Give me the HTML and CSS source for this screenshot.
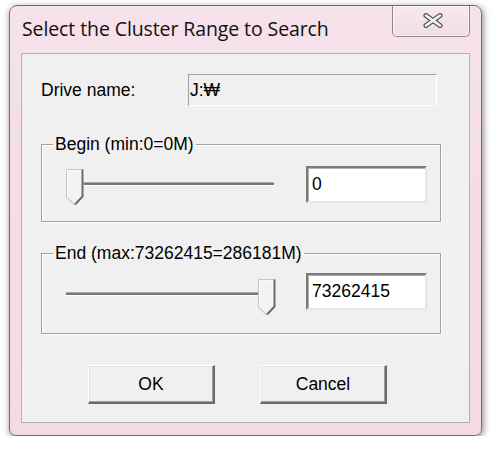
FILE: index.html
```html
<!DOCTYPE html>
<html>
<head>
<meta charset="utf-8">
<link rel="stylesheet" href="styles.css">
</head>
<body>
<div class="window">
  <div class="titlebar">
    <div class="title">Select the Cluster Range to Search</div>
    <div class="close">
      <svg width="22" height="15" viewBox="0 0 22 15">
        <path d="M4 2.5 L18 12.5 M18 2.5 L4 12.5" stroke="#5a5a5a" stroke-width="5.2" stroke-linecap="round" fill="none"/>
        <path d="M4 2.5 L18 12.5 M18 2.5 L4 12.5" stroke="#f4f4f4" stroke-width="2.6" stroke-linecap="round" fill="none"/>
      </svg>
    </div>
  </div>
  <div class="client">
    <div class="drive-row">
      <span class="label">Drive name:</span>
      <div class="drive-box">J:₩</div>
    </div>
    <fieldset class="group group-begin">
      <legend>Begin (min:0=0M)</legend>
      <div class="row">
        <div class="slider slider-begin">
          <div class="track"></div>
          <svg class="thumb" style="left:0px" width="18" height="37" viewBox="0 0 18 37">
            <path d="M0.5 0.5 H17.5 V28 L9 36.5 L0.5 28 Z" fill="#f3f3f3"/>
            <path d="M1 28 V1 H16.5" stroke="#ffffff" stroke-width="1" fill="none"/>
            <path d="M0.5 28.5 V0.5 H17" stroke="#c6c6c6" stroke-width="1" fill="none"/>
            <path d="M16.5 0.5 V27.5 L9 35.5" stroke="#6a6a6a" stroke-width="2" fill="none"/>
            <path d="M1 28.5 L8.5 36" stroke="#b0b0b0" stroke-width="1" fill="none"/>
          </svg>
        </div>
        <div class="edit">0</div>
      </div>
    </fieldset>
    <fieldset class="group group-end">
      <legend>End (max:73262415=286181M)</legend>
      <div class="row">
        <div class="slider slider-end">
          <div class="track"></div>
          <svg class="thumb" style="left:192px" width="18" height="37" viewBox="0 0 18 37">
            <path d="M0.5 0.5 H17.5 V28 L9 36.5 L0.5 28 Z" fill="#f3f3f3"/>
            <path d="M1 28 V1 H16.5" stroke="#ffffff" stroke-width="1" fill="none"/>
            <path d="M0.5 28.5 V0.5 H17" stroke="#c6c6c6" stroke-width="1" fill="none"/>
            <path d="M16.5 0.5 V27.5 L9 35.5" stroke="#6a6a6a" stroke-width="2" fill="none"/>
            <path d="M1 28.5 L8.5 36" stroke="#b0b0b0" stroke-width="1" fill="none"/>
          </svg>
        </div>
        <div class="edit">73262415</div>
      </div>
    </fieldset>
    <div class="buttons">
      <button class="btn">OK</button>
      <button class="btn">Cancel</button>
    </div>
  </div>
</div>
</body>
</html>
```
FILE: styles.css
```css
html, body {
  margin: 0;
  padding: 0;
  background: #ffffff;
}
body {
  padding: 5px 0 0 9px;
  font-family: "Liberation Sans", Arial, sans-serif;
  font-size: 17.5px;
  color: #000;
}
.window {
  box-sizing: border-box;
  width: 473px;
  height: 431px;
  border: 1px solid #6e6e6e;
  border-radius: 8px 8px 7px 7px;
  background: linear-gradient(to bottom, #f7e2eb 0%, #f4dde7 40%, #f3dbe6 100%);
  box-shadow: 1px 2px 7px rgba(0, 0, 0, 0.5);
  padding: 0 11px 12px 11px;
}
.titlebar {
  height: 47px;
  display: flex;
  justify-content: space-between;
  align-items: flex-start;
}
.title {
  font-family: "Open Sans", "Noto Sans", sans-serif;
  font-size: 19.5px;
  line-height: 26px;
  margin-top: 10px;
  padding-left: 1px;
  color: #111;
  letter-spacing: -0.1px;
}
.close {
  box-sizing: border-box;
  width: 78px;
  height: 31px;
  border: 1px solid #8c8890;
  border-top: none;
  border-radius: 0 0 5px 5px;
  background: linear-gradient(to bottom, #f8e8ef, #f1dde6);
  box-shadow: inset 0 0 0 1px rgba(255, 255, 255, 0.6);
  display: flex;
  align-items: center;
  justify-content: center;
}
.close svg {
  display: block;
  margin-left: 3px;
  margin-top: -1px;
}
.client {
  box-sizing: border-box;
  height: 370px;
  border: 1px solid #bcadb4;
  background: #f0f0f0;
  padding: 20px 28px 0 19px;
}
.drive-row {
  display: flex;
  align-items: center;
  height: 32px;
}
.label {
  width: 147px;
}
.drive-box {
  box-sizing: border-box;
  width: 249px;
  height: 32px;
  border-top: 1px solid #a0a0a0;
  border-left: 1px solid #a0a0a0;
  border-bottom: 1px solid #ffffff;
  border-right: 1px solid #ffffff;
  padding-left: 1px;
  display: flex;
  align-items: center;
  font-family: "Liberation Sans", "DejaVu Sans", sans-serif;
}
.group {
  box-sizing: border-box;
  width: 400px;
  margin: 0;
  border: 1px solid #a0a0a0;
  box-shadow: inset 1px 1px 0 #ffffff, 1px 1px 0 #ffffff;
  padding: 0 13px 0 24px;
  min-width: 0;
}
.group legend {
  padding: 0 2px;
  margin-left: -13px;
  line-height: 20px;
}
.group-begin {
  margin-top: 28px;
  padding-top: 12px;
  padding-bottom: 18px;
}
.group-end {
  margin-top: 21px;
  padding-top: 10px;
  padding-bottom: 23px;
}
.row {
  display: flex;
  align-items: flex-start;
  gap: 30px;
  height: 37px;
}
.slider {
  position: relative;
  width: 210px;
  height: 37px;
}
.slider-begin {
  margin-top: 3px;
}
.slider-end {
  margin-top: 6px;
}
.track {
  position: absolute;
  left: 0;
  right: 2px;
  top: 13px;
  height: 2px;
  background: #767676;
  border-top: 1px solid #a8a8a8;
  border-bottom: 1px solid #ffffff;
}
.thumb {
  position: absolute;
  top: 0;
  display: block;
}
.edit {
  box-sizing: border-box;
  width: 121px;
  height: 37px;
  background: #ffffff;
  border-top: 2px solid #7a7a7a;
  border-left: 2px solid #7a7a7a;
  border-bottom: 2px solid #e6e6e6;
  border-right: 2px solid #e6e6e6;
  box-shadow: inset 1px 1px 0 #b0b0b0;
  padding-left: 4px;
  display: flex;
  align-items: center;
}
.buttons {
  display: flex;
  gap: 45px;
  margin-top: 31px;
  padding-left: 47px;
}
.btn {
  box-sizing: border-box;
  width: 127px;
  height: 39px;
  margin: 0;
  padding: 0;
  font-family: "Liberation Sans", Arial, sans-serif;
  font-size: 17.5px;
  color: #000;
  background: #f0f0f0;
  border-top: 1px solid #ffffff;
  border-left: 1px solid #ffffff;
  border-right: 2px solid #6a6a6a;
  border-bottom: 2px solid #6a6a6a;
  box-shadow: inset -1px -1px 0 #a0a0a0, inset 1px 1px 0 #e3e3e3;
}
```
